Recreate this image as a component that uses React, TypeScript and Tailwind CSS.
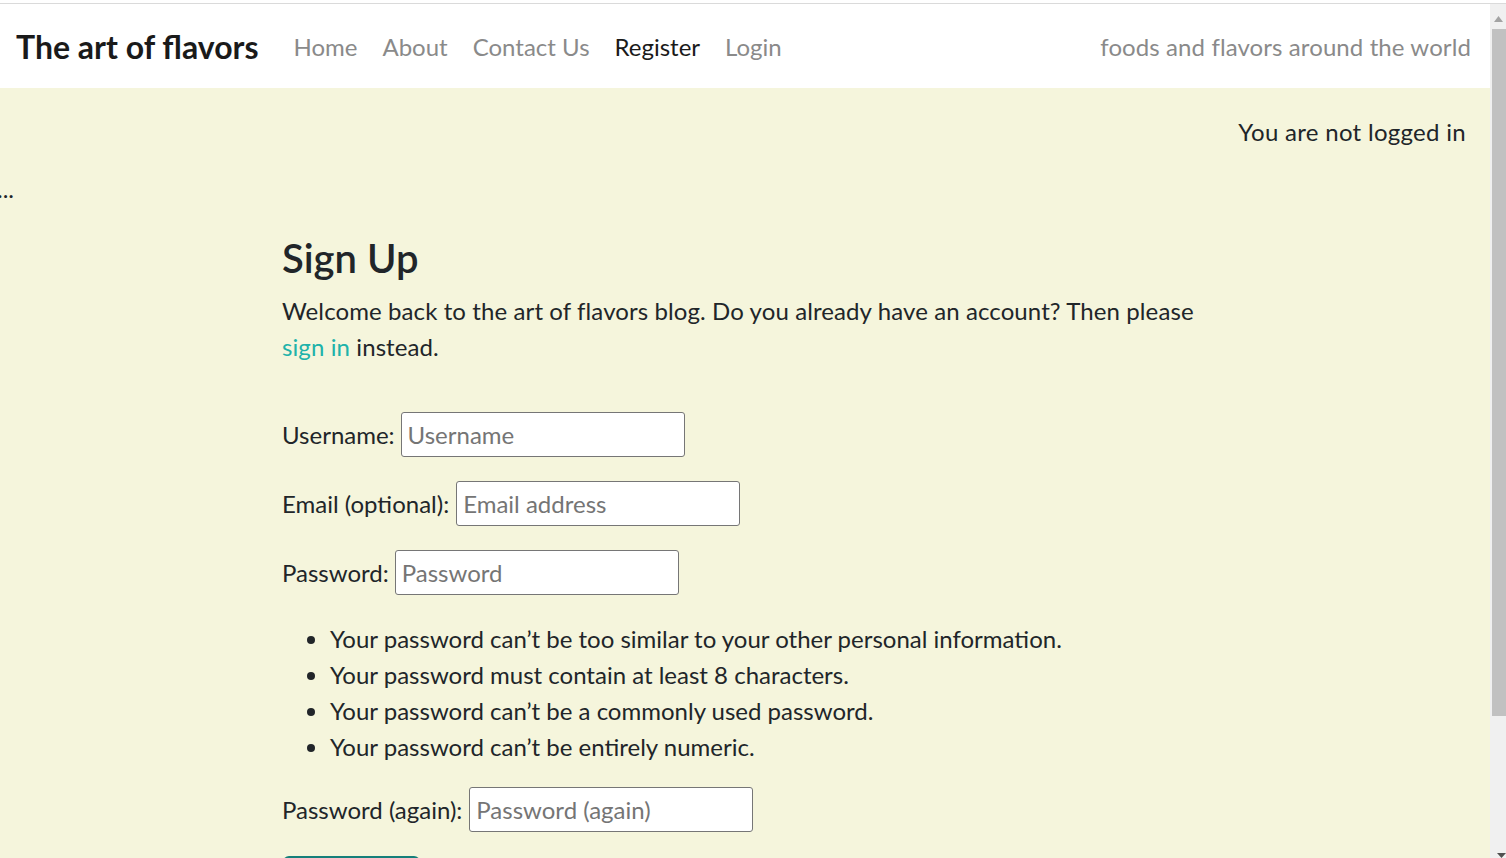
export default function App() {
  const inputCls =
    "w-[284px] h-[45px] border border-[#767676] rounded-[3px] bg-white px-[6px] text-[24px] text-[#212529] placeholder:text-[#757575] outline-none";
  return (
    <div className="flex flex-col h-[858px] overflow-hidden bg-white font-['Lato','Noto_Sans',sans-serif] text-[#212529]">
      <div className="h-[3px] bg-white" />
      <div className="h-px bg-[#dadada]" />
      <div className="flex flex-1 min-h-0">
        <div className="flex-1 flex flex-col min-w-0">
          <nav className="h-[84px] shrink-0 bg-white flex items-center pl-4 pr-[19px] pt-[2px]">
            <span className="text-[32px] font-bold text-[#1a1a1a]">The art of flavors</span>
            <div className="flex items-center ml-[35px] gap-[25px] text-[24px]">
              <a className="text-[#8a8a8a]">Home</a>
              <a className="text-[#8a8a8a]">About</a>
              <a className="text-[#8a8a8a]">Contact Us</a>
              <a className="text-[#1a1a1a]">Register</a>
              <a className="text-[#8a8a8a]">Login</a>
            </div>
            <span className="ml-auto text-[24px] text-[#8a8a8a] tracking-[0.1px]">foods and flavors around the world</span>
          </nav>
          <main className="flex-1 bg-[#f5f5dc] pt-[26px]">
            <div className="text-right pr-6 text-[24px] leading-[36px] tracking-[0.3px]">You are not logged in</div>
            <div className="mt-[21px] ml-[-3px] text-[24px] leading-[36px]">...</div>
            <div className="ml-[282px] w-[940px]">
              <h1 className="mt-[27px] text-[40px] leading-[48px] font-semibold">Sign Up</h1>
              <p className="mt-[11px] text-[24px] leading-[36px] tracking-[0.1px]">
                Welcome back to the art of flavors blog. Do you already have an account? Then please{" "}
                <a className="text-[#20b2aa]">sign in</a> instead.
              </p>
              <form className="mt-[47px] text-[24px]">
                <div className="flex items-center h-[45px] gap-[6px]">
                  <label>Username:</label>
                  <input className={inputCls} placeholder="Username" />
                </div>
                <div className="flex items-center h-[45px] gap-[7px] mt-[24px]">
                  <label>Email (optional):</label>
                  <input className={inputCls} placeholder="Email address" />
                </div>
                <div className="flex items-center h-[45px] gap-[6px] mt-[24px]">
                  <label>Password:</label>
                  <input className={inputCls} placeholder="Password" />
                </div>
                <ul className="mt-[26px] list-disc pl-[48px] leading-[36px]">
                  <li>Your password can’t be too similar to your other personal information.</li>
                  <li>Your password must contain at least 8 characters.</li>
                  <li>Your password can’t be a commonly used password.</li>
                  <li>Your password can’t be entirely numeric.</li>
                </ul>
                <div className="flex items-center h-[45px] gap-[7px] mt-[22px]">
                  <label>Password (again):</label>
                  <input className={inputCls} placeholder="Password (again)" />
                </div>
                <button
                  type="button"
                  className="mt-[24px] ml-px w-[137px] h-[54px] rounded-[6px] bg-[#157f7a] text-white text-[24px]"
                >
                  Sign Up
                </button>
              </form>
            </div>
          </main>
        </div>
        <div className="w-4 shrink-0 bg-[#f0f0f0] flex flex-col">
          <div className="h-[25px] flex items-center justify-center pt-[4px]">
            <svg width="9" height="6" viewBox="0 0 9 6">
              <polygon points="4.5,0 9,6 0,6" fill="#a3a3a3" />
            </svg>
          </div>
          <div className="ml-[2px] h-[687px] bg-[#c1c1c1]" />
          <div className="flex-1 flex items-end justify-end">
            <svg width="9" height="5" viewBox="0 0 9 5">
              <polygon points="0,0 9,0 4.5,5" fill="#505050" />
            </svg>
          </div>
        </div>
      </div>
    </div>
  );
}
